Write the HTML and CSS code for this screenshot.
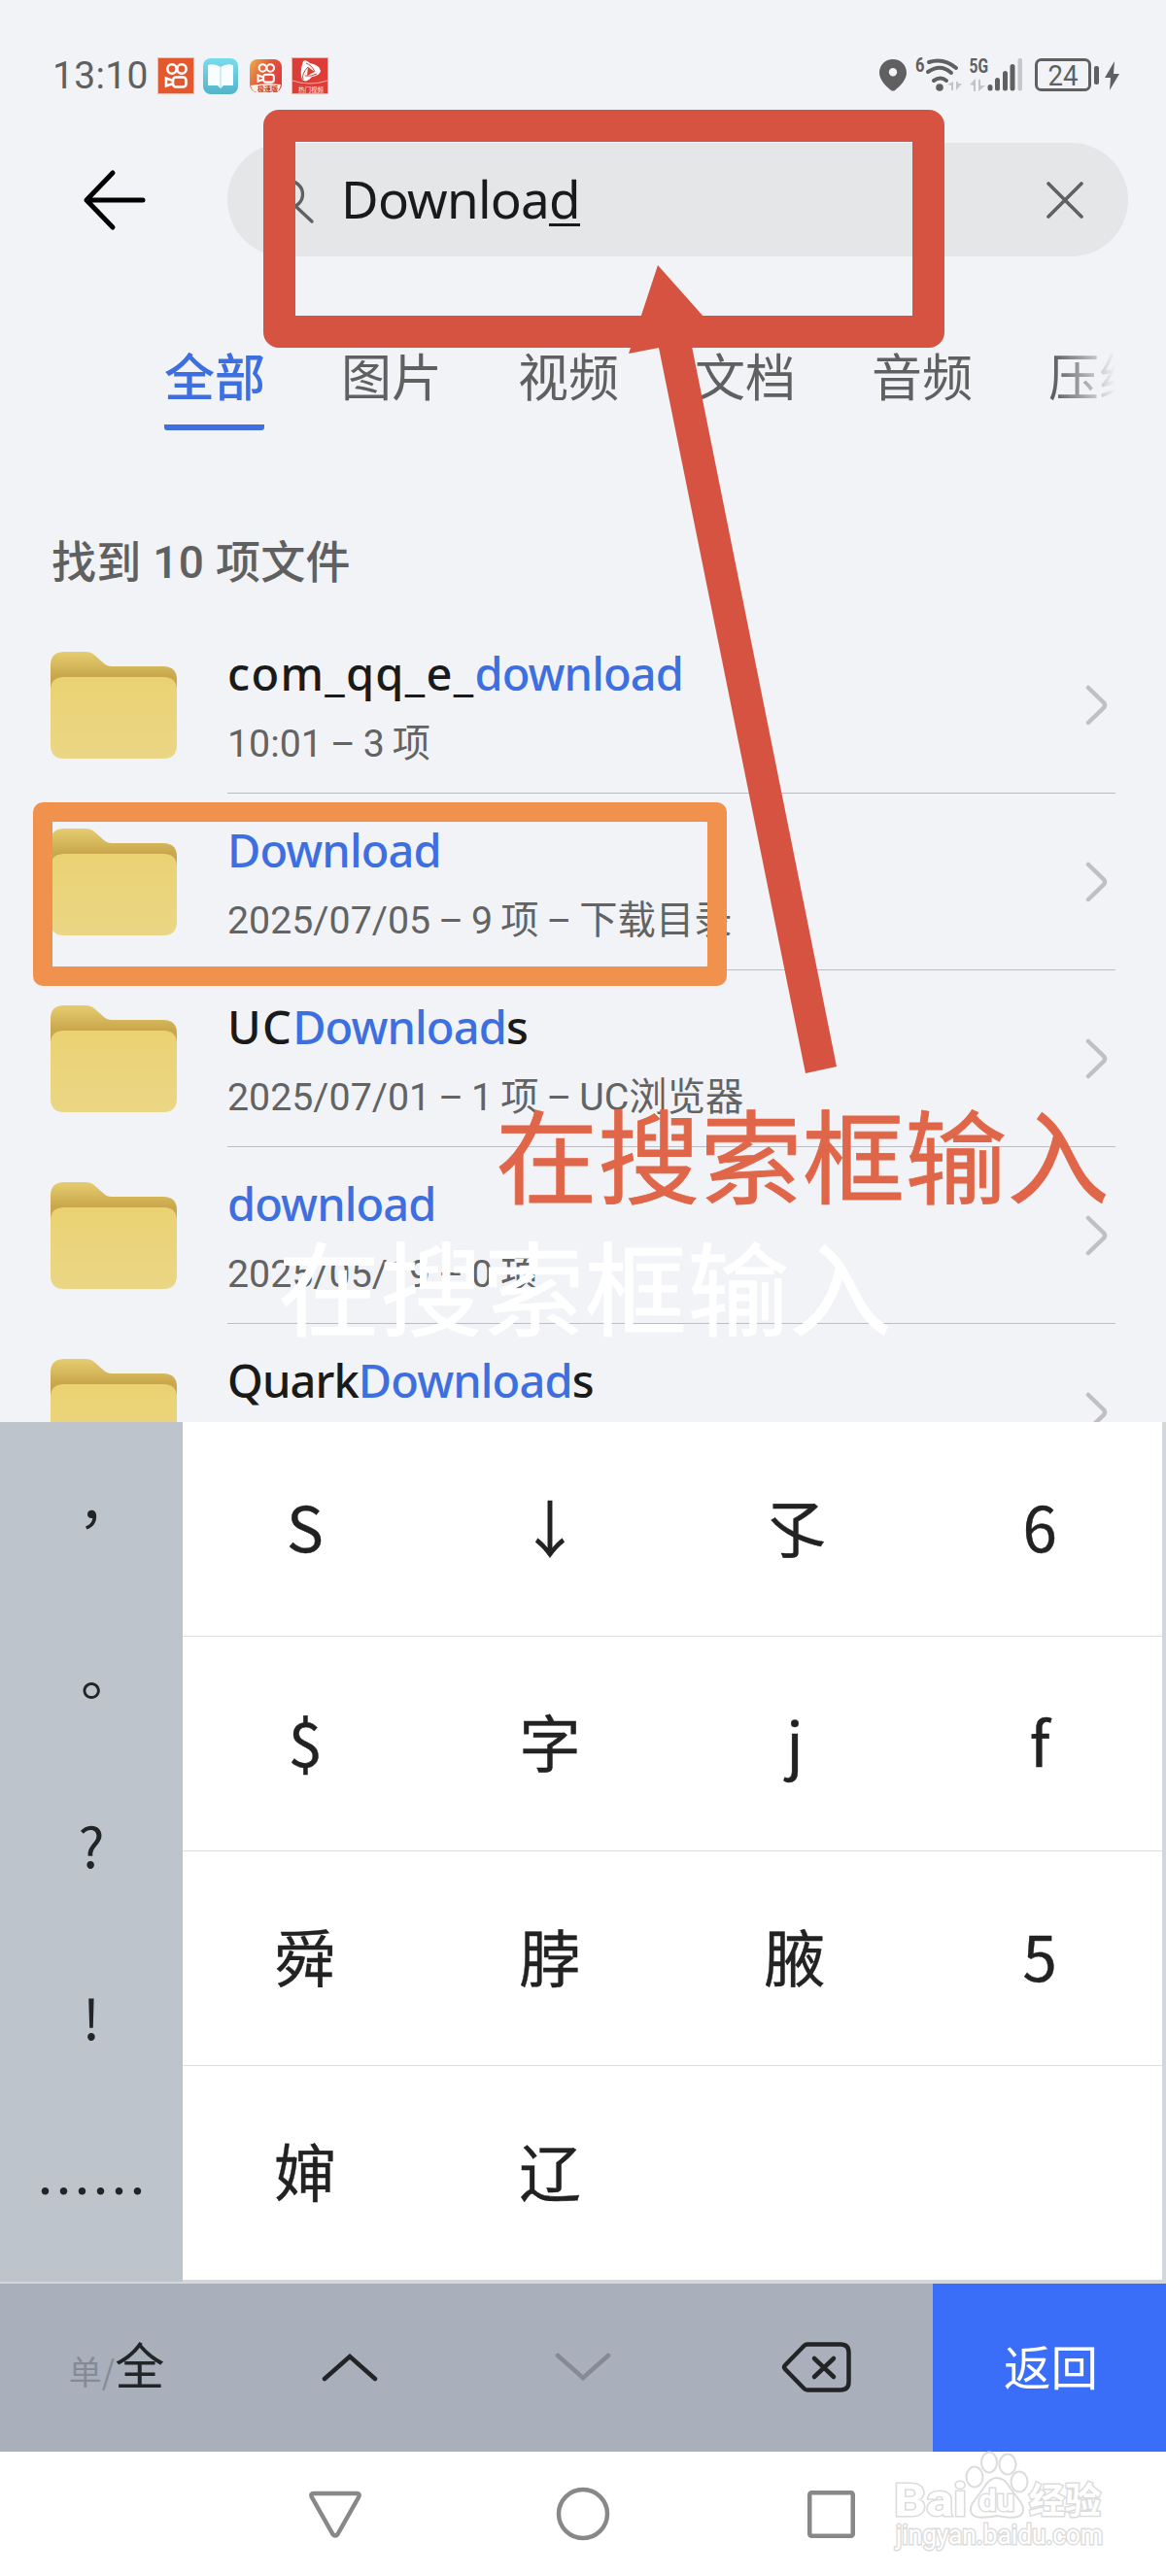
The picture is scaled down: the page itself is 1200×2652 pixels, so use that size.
FILE: index.html
```html
<!DOCTYPE html>
<html lang="zh-CN">
<head>
<meta charset="utf-8">
<title>文件搜索</title>
<link rel="stylesheet" href="styles.css">
</head>
<body>
<svg class="defs" width="0" height="0">
  <defs>
    <linearGradient id="tab" x1="0" y1="0" x2="0" y2="1"><stop offset="0" stop-color="#e6cd70"/><stop offset=".42" stop-color="#c9a74d"/></linearGradient>
    <linearGradient id="front" x1="0" y1="0" x2="0" y2="1"><stop offset="0" stop-color="#ead273"/><stop offset="1" stop-color="#ead685"/></linearGradient>
    <linearGradient id="book" x1="0" y1="0" x2="0" y2="1"><stop offset="0" stop-color="#79dcec"/><stop offset="1" stop-color="#54b3c9"/></linearGradient>
    <linearGradient id="lite" x1="0" y1="0" x2="1" y2=".6"><stop offset="0" stop-color="#efb04a"/><stop offset=".55" stop-color="#e2553a"/><stop offset="1" stop-color="#dc3c3c"/></linearGradient>
    <symbol id="folder" viewBox="0 0 130 110">
      <path d="M0 34V14Q0 0 14 0H36Q42 0 46 4L55 12Q58 15 63 15H116Q130 15 130 29V60H0Z" fill="url(#tab)"/>
      <path d="M0 40Q0 26 14 26H116Q130 26 130 40V96Q130 110 116 110H14Q0 110 0 96Z" fill="url(#front)"/>
    </symbol>
    <symbol id="chevron" viewBox="0 0 24 42"><path d="M3 3L19 18.500Q21 21 19 23.500L3 39" fill="none" stroke="#c0c0c3" stroke-width="4.500" stroke-linecap="round"/></symbol>
    <symbol id="camera" viewBox="0 0 24 26"><g fill="none" stroke="#fff" stroke-width="2.600"><circle cx="8" cy="6" r="4.700"/><circle cx="18" cy="6" r="4.700"/><rect x="9" y="14.500" width="13.500" height="10" rx="3"/><path d="M9 18L2 15.500V23.500L9 21"/></g></symbol>
  </defs>
</svg>
<div class="phone">
  <header class="status">
    <div class="status-left">
      <span class="clock">13:10</span>
      <svg width="38" height="38" viewBox="0 0 38 38"><rect width="38" height="38" fill="#f6b9a3"/><rect x="1" y="1" width="36" height="36" fill="#e4582d"/><use href="#camera" x="7" y="6" width="24" height="26"/></svg>
      <svg class="app-book" width="36" height="37" viewBox="0 0 36 37"><rect width="36" height="37" rx="8" fill="url(#book)"/><path d="M5 7Q12 5 18 9Q24 5 31 7V28H21L18 31L15 28H5Z" fill="#f8fdff"/><path d="M18 9V30" stroke="#c5e8f0" stroke-width="1.500"/></svg>
      <svg class="app-lite" width="33" height="34" viewBox="0 0 33 34"><rect width="33" height="34" rx="8" fill="url(#lite)"/><path d="M1 27Q16 24 32 26Q31 33 25 34H8Q2 33 1 27Z" fill="#fff2e6"/><use href="#camera" x="7" y="4" width="19" height="21"/><text x="8" y="33" font-size="7" font-weight="700" fill="#b3412b">极速版</text></svg>
      <svg class="app-hot" width="38" height="38" viewBox="0 0 38 38"><rect width="38" height="38" fill="#efaea8"/><rect x="1" y="1" width="36" height="36" fill="#dc3d36"/><path d="M12 4Q15 2 19 6Q29 8 30 14Q29 19 21 20Q15 27 11 23Q8 16 12 4Z" fill="#fff"/><path d="M17 10L24 15L16 19Z" fill="#dc3d36"/><path d="M15 6Q21 8 24 15M26 17Q20 20 14 19M12 23Q10 17 17 10" fill="none" stroke="#dc3d36" stroke-width="1"/><path d="M1 24Q19 30 37 24" fill="none" stroke="#f7b3ac" stroke-width="1"/><text x="7" y="36" font-size="6.500" fill="#ffe9e2">热门视频</text></svg>
    </div>
    <svg class="status-right" width="252" height="44" viewBox="902 54 252 44">
      <g fill="#606060">
        <path fill-rule="evenodd" d="M919 61C927 61 933 67 933 75C933 82 926 89 921 93Q919 94 917 93C912 89 905 82 905 75C905 67 911 61 919 61ZM919 70A4.200 4.200 0 1 0 919 78.400A4.200 4.200 0 1 0 919 70Z"/>
        <circle cx="967" cy="90" r="3.800"/>
        <rect x="1016.500" y="87" width="5" height="6.500" rx="2.500"/><rect x="1024" y="80" width="5" height="13.500" rx="2.500"/><rect x="1032" y="73" width="5" height="20.500" rx="2.500"/><rect x="1039.500" y="66" width="5" height="27.500" rx="2.500"/>
        <rect x="1126" y="68" width="5" height="19" rx="2"/>
        <path d="M1147 63L1137 80H1143L1142 93L1152 76H1146Z"/>
      </g>
      <rect x="1047.500" y="60" width="4.500" height="33.500" rx="2" fill="#c6c7ca"/>
      <g fill="#c3c4c7"><path d="M975 87L981 84V93H979V88Z M984 84H986V86L990 86L984 93Z M998 87L1004 81V94H1002V88Z M1007 82H1009V88H1014L1007 94Z"/></g>
      <g fill="none" stroke="#606060" stroke-width="4" stroke-linecap="round"><path d="M956 64Q971 59 984 70M955 74Q968 65 979 75M961 83Q968 78 974 83"/></g>
      <rect x="1066.500" y="61.500" width="55" height="31" rx="5" fill="none" stroke="#606060" stroke-width="3"/>
      <g fill="#606060"><text x="942" y="74" font-size="20" font-weight="700" textLength="9.500" lengthAdjust="spacingAndGlyphs">6</text><text x="997.500" y="75" font-size="21" font-weight="700" textLength="19.500" lengthAdjust="spacingAndGlyphs">5G</text><text x="1078.500" y="87.500" font-size="29.500" textLength="31" lengthAdjust="spacingAndGlyphs">24</text></g>
    </svg>
  </header>

  <div class="toolbar">
    <svg class="back" width="66" height="64" viewBox="0 0 66 64"><path d="M31 4L4 32L31 60M4 32H62" fill="none" stroke="#000" stroke-width="5" stroke-linecap="round" stroke-linejoin="round"/></svg>
    <div class="search">
      <svg width="42" height="50" viewBox="0 0 42 50"><g fill="none" stroke="#606060" stroke-width="3.400" stroke-linecap="round"><circle cx="16" cy="19" r="13.500"/><path d="M23 32L39 47"/></g></svg>
      <span class="query">Downloa<span class="composing">d</span></span>
      <svg class="clear" width="38" height="38" viewBox="0 0 38 38"><path d="M2 2L36 36M36 2L2 36" stroke="#606060" stroke-width="3.600" stroke-linecap="round"/></svg>
    </div>
  </div>

  <nav class="tabs">
    <span class="tab active">全部</span><span class="tab">图片</span><span class="tab">视频</span><span class="tab">文档</span><span class="tab">音频</span><span class="tab">压缩</span>
  </nav>

  <h1 class="count">找到 10 项文件</h1>

  <ul class="files">
    <li class="file"><svg class="folder"><use href="#folder"/></svg><div class="info"><div><p class="name"><span class="prefix">com_qq_e_</span><b>download</b></p><p class="meta">10:01 – 3 项</p></div><svg class="chev"><use href="#chevron"/></svg></div></li>
    <li class="file"><svg class="folder"><use href="#folder"/></svg><div class="info"><div><p class="name"><b>Download</b></p><p class="meta">2025/07/05 – 9 项 – 下载目录</p></div><svg class="chev"><use href="#chevron"/></svg></div></li>
    <li class="file"><svg class="folder"><use href="#folder"/></svg><div class="info"><div><p class="name"><span class="prefix">UC</span><b>Download</b>s</p><p class="meta">2025/07/01 – 1 项 – UC浏览器</p></div><svg class="chev"><use href="#chevron"/></svg></div></li>
    <li class="file"><svg class="folder"><use href="#folder"/></svg><div class="info"><div><p class="name"><b>download</b></p><p class="meta">2025/05/19 – 0 项</p></div><svg class="chev"><use href="#chevron"/></svg></div></li>
    <li class="file"><svg class="folder"><use href="#folder"/></svg><div class="info"><div><p class="name">Quark<b>Download</b>s</p></div><svg class="chev"><use href="#chevron"/></svg></div></li>
  </ul>

  <section class="keyboard">
    <div class="punctuation"><span class="low">，</span><span class="low">。</span><span>?</span><span>!</span><span>……</span></div>
    <div class="candidates">
      <span>S</span><span>↓</span><span>孓</span><span>6</span>
      <span>$</span><span>字</span><span>j</span><span>f</span>
      <span>舜</span><span>脖</span><span>腋</span><span>5</span>
      <span>婶</span><span>辽</span><span></span><span></span>
    </div>
  </section>
  <div class="keybar">
    <span class="mode"><small>单/</small>全</span>
    <span><svg width="58" height="32" viewBox="0 0 58 32"><path d="M3 28L29 5L55 28" fill="none" stroke="#222426" stroke-width="4.500" stroke-linecap="round"/></svg></span>
    <span><svg width="58" height="32" viewBox="0 0 58 32"><path d="M3 4L29 27L55 4" fill="none" stroke="#858a96" stroke-width="4.500" stroke-linecap="round"/></svg></span>
    <span><svg width="72" height="52" viewBox="0 0 72 52"><g fill="none" stroke="#222426" stroke-width="4.500" stroke-linecap="round" stroke-linejoin="round"><path d="M27 2.500H61Q69.500 2.500 69.500 11V41Q69.500 49.500 61 49.500H27Q25 49.500 23.500 48L4 28Q2 26 4 24L23.500 4Q25 2.500 27 2.500Z"/><path d="M34 17L54 36M54 17L34 36"/></g></svg></span>
    <span class="return">返回</span>
  </div>
  <footer class="system-nav">
    <svg width="54" height="50" viewBox="0 0 54 50"><path d="M5 4H49Q53 4 51 8L29.500 46Q27 49 24.500 46L3 8Q1 4 5 4Z" fill="none" stroke="#888" stroke-width="4.500"/></svg>
    <svg width="56" height="56" viewBox="0 0 56 56"><circle cx="28" cy="28" r="25" fill="none" stroke="#888" stroke-width="4.500"/></svg>
    <svg width="49" height="49" viewBox="0 0 49 49"><rect x="2.250" y="2.250" width="44.500" height="44.500" rx="2" fill="none" stroke="#888" stroke-width="4.500"/></svg>
  </footer>

  <div class="frame frame-search"></div>
  <div class="frame frame-file"></div>
  <svg class="pointer" width="240" height="840" viewBox="640 270 240 840"><path d="M677 273L741 345L711 351.500L861 1098L829 1105L678 358L647 364Z" fill="#d75341"/></svg>
  <p class="note note-red">在搜索框输入</p>
  <p class="note note-white">在搜索框输入</p>
  <svg class="watermark" width="230" height="120" viewBox="915 2520 230 120">
    <g fill="#fff" stroke="#dcdcdc" stroke-width="2">
      <ellipse cx="1018" cy="2535" rx="8" ry="10.500"/><ellipse cx="1037" cy="2537" rx="8.500" ry="10.500"/><ellipse cx="1003" cy="2550" rx="8.500" ry="10.500"/><ellipse cx="1049" cy="2555" rx="8.500" ry="10.500"/>
      <path d="M1026 2551Q1034 2551 1040 2562L1049 2574Q1056 2583 1051 2589Q1046 2594 1026 2590Q1006 2594 1001 2589Q996 2583 1003 2574L1012 2562Q1018 2551 1026 2551Z"/>
      <g paint-order="stroke" font-weight="700" stroke-width="3">
        <text x="920" y="2590" font-size="47" textLength="75" lengthAdjust="spacingAndGlyphs">Bai</text>
        <text x="1007" y="2585" font-size="31" textLength="37" lengthAdjust="spacingAndGlyphs">du</text>
        <text x="1059" y="2588" font-size="37" textLength="74" lengthAdjust="spacingAndGlyphs">经验</text>
        <text x="922" y="2619" font-size="27" font-weight="400" textLength="213" lengthAdjust="spacingAndGlyphs">jingyan.baidu.com</text>
      </g>
    </g>
  </svg>
</div>
</body>
</html>
```
FILE: styles.css
```css
* { box-sizing: border-box; margin: 0; padding: 0; }
body { background: #f1f3f7; font-family: Roboto, "Noto Sans CJK SC", sans-serif; }
svg { display: block; flex: none; }
.defs { position: absolute; }
.phone { position: relative; width: 1200px; height: 2652px; overflow: hidden; display: flex; flex-direction: column; }

.status { height: 147px; flex: none; display: flex; justify-content: space-between; align-items: flex-start; padding: 54px 46px 0 54px; }
.status-left { display: flex; align-items: center; height: 48px; }
.clock { width: 108px; font-size: 39px; line-height: 48px; color: #606060; letter-spacing: .3px; }
.app-book { margin-left: 9px; }
.app-lite { margin-left: 12px; }
.app-hot { margin-left: 10px; }

.toolbar { flex: none; display: flex; align-items: center; height: 117px; padding: 0 39px 0 85px; }
.search { display: flex; align-items: center; width: 927px; height: 117px; margin-left: 83px; padding: 0 46px 0 48px; border-radius: 59px; background: #e5e6e8; }
.query { flex: 1; margin-left: 27px; padding-bottom: 3px; font-family: "Noto Sans", sans-serif; font-size: 53px; line-height: 113px; letter-spacing: -.8px; color: #1a1a1a; }
.composing { border-bottom: 3px solid #1a1a1a; display: inline-block; line-height: 50px; }

.tabs { flex: none; display: flex; gap: 79px; width: 1148px; margin-top: 91px; padding-left: 169px; overflow: hidden; -webkit-mask-image: linear-gradient(90deg, #000 1085px, transparent 1148px); mask-image: linear-gradient(90deg, #000 1085px, transparent 1148px); }
.tab { flex: none; width: 103px; height: 88px; font-size: 52px; line-height: 62px; font-family: "Noto Sans CJK SC", sans-serif; color: #606060; white-space: nowrap; }
.active { color: #3e6fe0; font-weight: 500; border-bottom: 6px solid #426fe0; border-radius: 3px; }

.count { flex: none; margin: 106px 0 0 53px; font-size: 46px; font-weight: 500; line-height: 61px; height: 60px; letter-spacing: .3px; color: #606060; }

.files { flex: none; list-style: none; height: 830px; margin-top: 25px; overflow: hidden; }
.file { display: flex; height: 182px; padding: 0 52px; }
.folder { width: 130px; height: 110px; margin-top: 37px; }
.info { flex: 1; display: flex; justify-content: space-between; height: 183px; margin-left: 52px; padding: 29px 8px 0 0; border-bottom: 1px solid #bcbdc2; white-space: nowrap; }
.name { font-family: "Noto Sans", sans-serif; font-size: 47px; font-weight: 500; line-height: 60px; letter-spacing: -.9px; color: #1a1a1a; }
.name b { font-weight: 500; color: #3e6fe0; }
.prefix { letter-spacing: 1.300px; }
.meta { margin-top: 18px; font-size: 39.300px; line-height: 50px; word-spacing: -1.700px; color: #636363; }
.chev { width: 24px; height: 42px; margin: 42px -1px 0 0; }

.keyboard { flex: none; display: flex; height: 887px; background: #d3d7dc; }
.punctuation { display: flex; flex-direction: column; width: 188px; height: 885px; background: #bdc4cc; color: #222426; font-family: "Noto Sans CJK TC", sans-serif; font-size: 57px; text-align: center; }
.punctuation span { height: 177px; line-height: 160px; }
.punctuation .low { line-height: 192px; }
.candidates { display: grid; grid-template-columns: repeat(4, 252px); grid-template-rows: repeat(4, 221px); width: 1008px; height: 883px; overflow: hidden; background: #fff; font-family: "Noto Sans CJK SC", sans-serif; font-size: 63.500px; color: #222; -webkit-text-stroke: .4px #222; }
.candidates span { border-bottom: 1px solid #dedede; text-align: center; line-height: 213px; }

.keybar { flex: none; display: grid; grid-template-columns: repeat(5, 240px); height: 173px; background: #a9afbb; color: #222426; }
.keybar span { display: flex; align-items: center; justify-content: center; padding-bottom: 2px; font-family: "Noto Sans CJK SC", sans-serif; }
.keybar .mode { align-items: baseline; padding-top: 47px; font-size: 51px; line-height: 70px; }
.mode small { font-size: 34px; color: #858b96; }
.keybar .return { padding: 0 0 6px 3px; background: #3a6ef8; color: #fff; font-size: 48.500px; }
.system-nav { flex: none; display: flex; align-items: center; height: 128px; padding-left: 318px; background: #fff; }
.system-nav svg:nth-child(2) { margin-left: 200px; }
.system-nav svg:nth-child(3) { margin-left: 203px; }

.candidates { border-right: 0 solid; }
.frame { position: absolute; }
.frame-search { left: 271px; top: 113px; width: 701px; height: 245px; border: 33px solid #d75341; border-radius: 16px; }
.frame-file { left: 34px; top: 826px; width: 714px; height: 189px; border: 20px solid #f0914e; border-radius: 10px; }
.pointer { position: absolute; left: 640px; top: 270px; }
.note { position: absolute; font-family: "Noto Sans CJK SC", sans-serif; font-size: 105px; line-height: 120px; letter-spacing: .3px; white-space: nowrap; -webkit-text-stroke: .8px currentColor; }
.note-red { left: 510px; top: 1125px; color: #e06649; }
.note-white { left: 286px; top: 1261px; color: #fff; }
.watermark { position: absolute; left: 915px; top: 2520px; }
```
